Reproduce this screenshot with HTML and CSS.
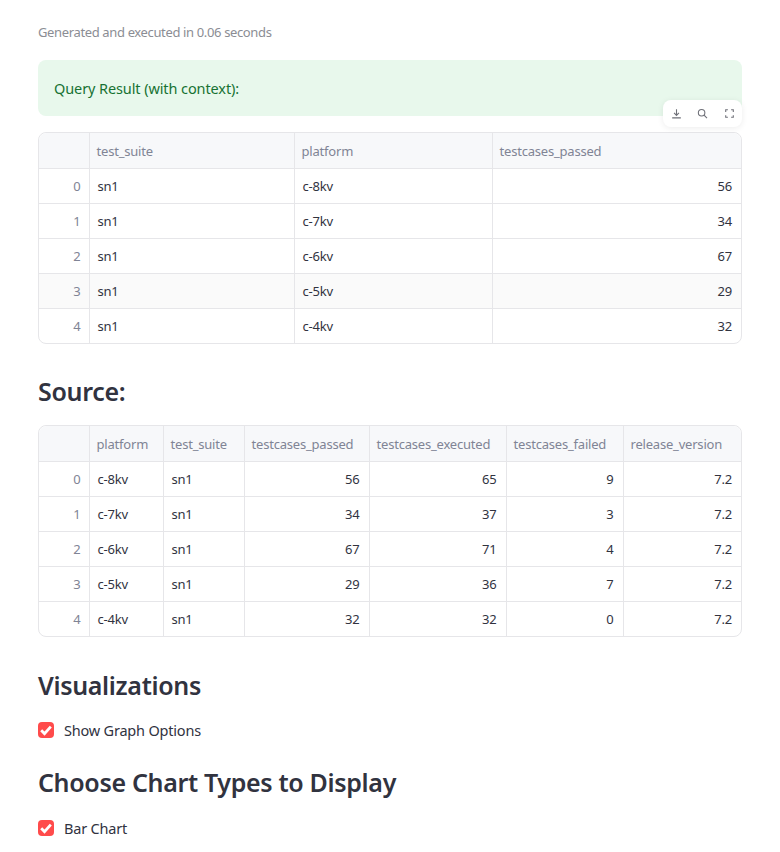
FILE: index.html
```html
<!DOCTYPE html>
<html lang="en">
<head>
    <meta charset="UTF-8">
    <title>Query Result</title>
    <link rel="stylesheet" href="styles.css">
</head>
<body>
    <div class="main">
        <p class="caption">Generated and executed in 0.06 seconds</p>
        <div class="alert">Query Result (with context):</div>

        <div class="frame">
            <div class="toolbar">
                <svg viewBox="0 0 24 24"><path d="M12 4v11M7.5 11l4.5 4.5 4.5-4.5M4 20h16"/></svg>
                <svg viewBox="0 0 24 24"><circle cx="8.5" cy="10.5" r="6"/><path d="M13 15l5.5 5.5"/></svg>
                <svg viewBox="0 0 24 24"><path d="M5 9V5h4M15 5h4v4M19 15v4h-4M9 19H5v-4"/></svg>
            </div>
            <table class="grid">
                <colgroup>
                    <col class="w50"><col class="w205"><col class="w198"><col>
                </colgroup>
                <thead>
                    <tr><th></th><th>test_suite</th><th>platform</th><th>testcases_passed</th></tr>
                </thead>
                <tbody>
                    <tr><td class="idx">0</td><td>sn1</td><td>c-8kv</td><td class="num">56</td></tr>
                    <tr><td class="idx">1</td><td>sn1</td><td>c-7kv</td><td class="num">34</td></tr>
                    <tr><td class="idx">2</td><td>sn1</td><td>c-6kv</td><td class="num">67</td></tr>
                    <tr class="hover"><td class="idx">3</td><td>sn1</td><td>c-5kv</td><td class="num">29</td></tr>
                    <tr><td class="idx">4</td><td>sn1</td><td>c-4kv</td><td class="num">32</td></tr>
                </tbody>
            </table>
        </div>

        <h2 class="source">Source:</h2>

        <div class="frame">
            <table class="grid">
                <colgroup>
                    <col class="w50"><col class="w74"><col class="w81"><col class="w125"><col class="w137"><col class="w117"><col>
                </colgroup>
                <thead>
                    <tr><th></th><th>platform</th><th>test_suite</th><th>testcases_passed</th><th>testcases_executed</th><th>testcases_failed</th><th>release_version</th></tr>
                </thead>
                <tbody>
                    <tr><td class="idx">0</td><td>c-8kv</td><td>sn1</td><td class="num">56</td><td class="num">65</td><td class="num">9</td><td class="num">7.2</td></tr>
                    <tr><td class="idx">1</td><td>c-7kv</td><td>sn1</td><td class="num">34</td><td class="num">37</td><td class="num">3</td><td class="num">7.2</td></tr>
                    <tr><td class="idx">2</td><td>c-6kv</td><td>sn1</td><td class="num">67</td><td class="num">71</td><td class="num">4</td><td class="num">7.2</td></tr>
                    <tr><td class="idx">3</td><td>c-5kv</td><td>sn1</td><td class="num">29</td><td class="num">36</td><td class="num">7</td><td class="num">7.2</td></tr>
                    <tr><td class="idx">4</td><td>c-4kv</td><td>sn1</td><td class="num">32</td><td class="num">32</td><td class="num">0</td><td class="num">7.2</td></tr>
                </tbody>
            </table>
        </div>

        <h2 class="viz">Visualizations</h2>
        <label class="check">
            <span class="box"><svg viewBox="0 0 16 16"><path d="M3.2 8.3l3.3 3.3 6.3-7"/></svg></span>
            Show Graph Options
        </label>

        <h2 class="choose">Choose Chart Types to Display</h2>
        <label class="check last">
            <span class="box"><svg viewBox="0 0 16 16"><path d="M3.2 8.3l3.3 3.3 6.3-7"/></svg></span>
            Bar Chart
        </label>
    </div>
</body>
</html>
```

FILE: styles.css
```css
html, body {
    height: 852px;
    overflow: hidden;
}
body {
    font-family: "Noto Sans", sans-serif;
    margin: 0;
    padding: 0;
    background-color: white;
    color: #31333f;
}
.main {
    padding: 23px 38px 0;
}
.caption {
    margin: 0;
    font-size: 13px;
    line-height: 19px;
    letter-spacing: -0.36px;
    color: #8b8d94;
}
.alert {
    margin-top: 18px;
    height: 56px;
    box-sizing: border-box;
    padding: 0 16px;
    line-height: 57px;
    font-size: 14.5px;
    letter-spacing: -0.1px;
    color: #177233;
    background-color: #e8f8ec;
    border-radius: 8px;
}
.frame {
    position: relative;
    margin-top: 16px;
    border: 1px solid #e6e6e9;
    border-radius: 8px;
}
.toolbar {
    position: absolute;
    top: -33px;
    right: -1px;
    width: 79px;
    height: 27px;
    box-sizing: border-box;
    padding: 0 6px 0 7px;
    display: flex;
    align-items: center;
    justify-content: space-between;
    background-color: white;
    border-radius: 8px;
    box-shadow: 0 1px 6px rgba(0, 0, 0, 0.08);
}
.toolbar svg {
    width: 13px;
    height: 13px;
    fill: none;
    stroke: #6f7078;
    stroke-width: 2;
}
.grid {
    width: 100%;
    border-collapse: collapse;
    table-layout: fixed;
    font-size: 13px;
}
.w50 { width: 50px; }
.w74 { width: 74px; }
.w81 { width: 81px; }
.w125 { width: 125px; }
.w137 { width: 137px; }
.w117 { width: 117px; }
.w205 { width: 205px; }
.w198 { width: 198px; }
.grid th, .grid td {
    padding: 0 9px 0 8px;
    height: 35px;
    box-sizing: border-box;
    border-left: 1px solid #e6e6e9;
    border-top: 1px solid #e6e6e9;
    text-align: left;
    font-weight: 400;
    letter-spacing: -0.2px;
    white-space: nowrap;
    overflow: hidden;
}
.grid th:first-child, .grid td:first-child {
    border-left: 0;
}
.grid th {
    border-top: 0;
    padding-top: 2px;
    padding-left: 7px;
    color: #808495;
    background-color: #f7f8fa;
}
.grid th:first-child {
    border-top-left-radius: 8px;
}
.grid th:last-child {
    border-top-right-radius: 8px;
}
.grid td.idx {
    text-align: right;
    padding-right: 8px;
    color: #808495;
}
.grid td.num {
    text-align: right;
}
.hover td {
    background-color: #fafafa;
}
h2 {
    margin: 0;
    font-weight: 600;
    font-size: 25px;
    line-height: 36px;
    letter-spacing: -0.33px;
}
.source {
    margin-top: 29px;
}
.viz {
    margin-top: 30px;
}
.choose {
    margin-top: 22px;
}
.check {
    display: flex;
    align-items: center;
    gap: 10px;
    height: 24px;
    margin-top: 15px;
    font-size: 14.5px;
    letter-spacing: -0.2px;
}
.check.last {
    margin-top: 16px;
}
.box {
    width: 16px;
    height: 16px;
    background-color: #ff4b4b;
    border-radius: 4px;
    display: flex;
}
.box svg {
    fill: none;
    stroke: white;
    stroke-width: 2.8;
}
```
